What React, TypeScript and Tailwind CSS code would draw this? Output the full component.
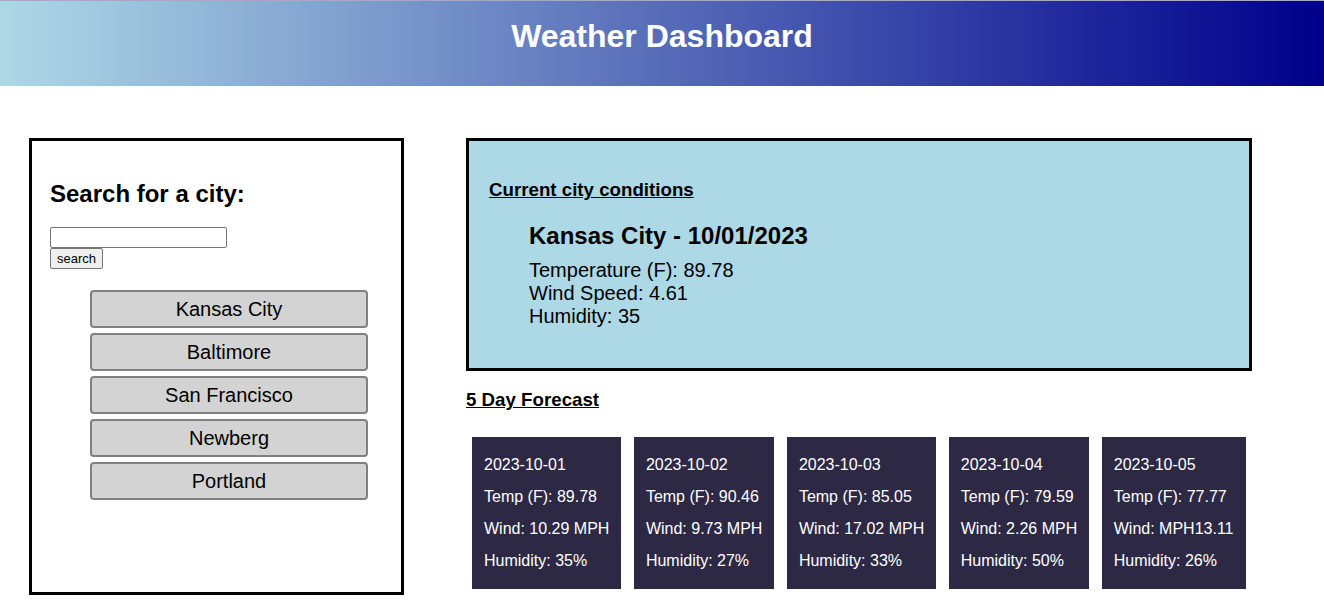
import React from "react";

const cities = ["Kansas City", "Baltimore", "San Francisco", "Newberg", "Portland"];

const forecast = [
  { date: "2023-10-01", temp: "89.78", wind: "10.29 MPH", hum: "35%" },
  { date: "2023-10-02", temp: "90.46", wind: "9.73 MPH", hum: "27%" },
  { date: "2023-10-03", temp: "85.05", wind: "17.02 MPH", hum: "33%" },
  { date: "2023-10-04", temp: "79.59", wind: "2.26 MPH", hum: "50%" },
  { date: "2023-10-05", temp: "77.77", wind: "MPH13.11", hum: "26%" },
];

export default function App() {
  return (
    <div className="min-h-[608px] bg-white font-['Liberation_Sans',Arial,sans-serif] text-black">
      <header className="h-[86px] border-t border-[#aaa6c6] bg-[linear-gradient(to_right,#add8e6,#00008b)] pt-[17px]">
        <h1 className="text-center text-[32px] font-bold leading-[37px] text-white">Weather Dashboard</h1>
      </header>

      <main className="flex items-start pl-[29px] pt-[52px]">
        {/* search panel */}
        <section className="h-[457px] w-[375px] border-[3px] border-black px-[18px] pt-[39px]">
          <h2 className="text-[24px] font-bold leading-[28px]">Search for a city:</h2>
          <div className="mt-[19px] flex flex-col items-start">
            <input
              type="text"
              className="h-[21px] w-[177px] rounded-[2px] border border-[#767676] bg-white px-1 text-[13px]"
            />
            <button className="h-[21px] rounded-[2px] border border-[#767676] bg-[#efefef] px-[6px] text-[13px] leading-[19px]">
              search
            </button>
          </div>
          <ul className="ml-[40px] mt-[21px] flex w-[278px] flex-col gap-[5px]">
            {cities.map((c) => (
              <li key={c}>
                <button className="h-[38px] w-full rounded-[4px] border-2 border-[#808080] bg-[#d3d3d3] text-[20px] leading-[34px]">
                  {c}
                </button>
              </li>
            ))}
          </ul>
        </section>

        {/* results */}
        <section className="ml-[62px] w-[786px]">
          <div className="h-[233px] border-[3px] border-black bg-[#add8e6] px-5 pt-[38px]">
            <h4 className="text-[18.72px] font-bold leading-[21px] underline">Current city conditions</h4>
            <div className="pl-10">
              <h3 className="mt-[22px] text-[24px] font-bold leading-[28px]">Kansas City - 10/01/2023</h3>
              <div className="mt-[9px] text-[20px] leading-[23px]">
                <p>Temperature (F): 89.78</p>
                <p>Wind Speed: 4.61</p>
                <p>Humidity: 35</p>
              </div>
            </div>
          </div>

          <h4 className="mt-[18px] text-[18.72px] font-bold leading-[21px] underline">5 Day Forecast</h4>

          <div className="ml-[6px] mt-[27px] flex gap-[12.5px]">
            {forecast.map((d) => (
              <div key={d.date} className="bg-[#2d2945] px-3 pb-[12px] pt-[12px] text-[16px] leading-8 text-white">
                <p>{d.date}</p>
                <p>Temp (F): {d.temp}</p>
                <p>Wind: {d.wind}</p>
                <p>Humidity: {d.hum}</p>
              </div>
            ))}
          </div>
        </section>
      </main>
    </div>
  );
}
